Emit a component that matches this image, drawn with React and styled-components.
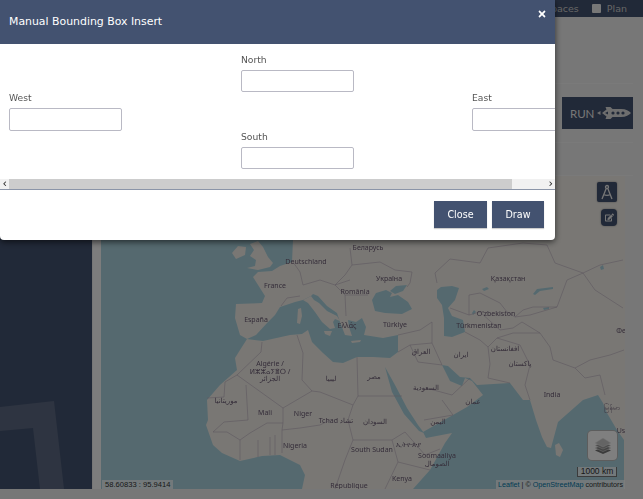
import React from "react";
import styled, { createGlobalStyle } from "styled-components";
import { FaEdit, FaTimes, FaChevronLeft, FaChevronRight } from "react-icons/fa";

const navy = "#435270";
const uiFont = `"DejaVu Sans", "Liberation Sans", sans-serif`;

const GlobalStyle = createGlobalStyle`
  html, body {
    margin: 0;
    padding: 0;
    overflow: hidden;
    background: #eeeeee;
    font-family: ${uiFont};
  }
  * { box-sizing: border-box; }
`;

const Page = styled.div`
  width: 643px;
  height: 499px;
  display: flex;
  flex-direction: column;
  overflow: hidden;
`;

const TopNav = styled.div`
  height: 17px;
  flex: none;
  background: ${navy};
  color: #ccc;
  display: flex;
  justify-content: flex-end;
  align-items: center;
  font-size: 9.5px;
  white-space: nowrap;
`;

const NavItem = styled.span`
  display: flex;
  align-items: center;
  gap: 6px;
  margin-right: ${(p) => p.$gap}px;
`;

const NavCheck = styled.i`
  width: 9px;
  height: 9px;
  background: #eee;
  border-radius: 1px;
`;

const Body = styled.div`
  height: 472px;
  flex: none;
  display: flex;
  align-items: stretch;
`;

const Sidebar = styled.div`
  position: relative;
  width: 92px;
  height: 472px;
  flex: none;
  background: ${navy};
  overflow: hidden;
  svg { position: absolute; left: 0; bottom: 0; }
`;

const Main = styled.div`
  flex: 1;
  min-width: 0;
  height: 472px;
  padding-left: 1px;
  display: flex;
  flex-direction: column;
`;

const Panel = styled.div`
  height: ${(p) => p.$height}px;
  flex: none;
  margin: 0 10px 0 8px;
  border-bottom: 1px solid #f4f4f4;
  display: flex;
  justify-content: flex-end;
  align-items: center;
`;

const RunButton = styled.button`
  width: 71px;
  height: 32px;
  margin: 0;
  border: 0;
  padding: 0 0 0 8px;
  background: ${navy};
  color: #eee;
  font-family: "Lato", sans-serif;
  font-size: 11.5px;
  display: flex;
  align-items: center;
  gap: 3px;
`;

const MapFrame = styled.div`
  position: relative;
  width: 532px;
  height: 313px;
  flex: none;
  padding-left: 8px;
  background: #fafafa;
`;

const MapCanvas = styled.svg`
  display: block;
  filter: blur(0.35px);
`;

const MapText = styled.text`
  font-family: "Noto Sans", "DejaVu Sans", sans-serif;
  font-size: 7px;
  fill: #6a5a72;
  text-anchor: middle;
`;

const CompassButton = styled.div`
  position: absolute;
  left: 504px;
  top: 6px;
  width: 20px;
  height: 20px;
  border-radius: 2px;
  background: ${navy};
  box-shadow: 0 0 2px rgba(0, 0, 0, 0.4);
  display: flex;
  align-items: center;
  justify-content: center;
`;

const EditButton = styled.div`
  position: absolute;
  left: 508px;
  top: 33px;
  width: 16px;
  height: 17px;
  border-radius: 4px;
  background: ${navy};
  box-shadow: 0 0 2px rgba(0, 0, 0, 0.4);
  color: #eee;
  font-size: 9px;
  display: flex;
  align-items: center;
  justify-content: center;
`;

const LayersControl = styled.div`
  position: absolute;
  left: 495px;
  top: 255px;
  width: 29px;
  height: 29px;
  border-radius: 4px;
  background: #fff;
  box-shadow: 0 0 0 1px #bbb;
  display: flex;
  align-items: center;
  justify-content: center;
`;

const ScaleBar = styled.div`
  position: absolute;
  left: 484px;
  top: 291px;
  width: 40px;
  height: 10px;
  border: 1px solid #777;
  border-top: 0;
  background: rgba(255, 255, 255, 0.7);
  color: #333;
  font: 8.5px/9px "Liberation Sans", sans-serif;
  text-align: center;
`;

const Attribution = styled.div`
  position: absolute;
  right: 0;
  bottom: 0;
  height: 9px;
  padding: 0 2px 0 2px;
  background: rgba(255, 255, 255, 0.7);
  color: #333;
  font: 7.2px/9px "Liberation Sans", sans-serif;
  white-space: nowrap;
  a { color: #0078a8; text-decoration: none; }
`;

const Coords = styled.div`
  position: absolute;
  left: 9px;
  bottom: 0;
  height: 9px;
  padding: 0 3px;
  background: rgba(255, 255, 255, 0.7);
  color: #333;
  font: 7.6px/9px "Liberation Sans", sans-serif;
`;

const Backdrop = styled.div`
  position: fixed;
  inset: 0;
  background: rgba(0, 0, 0, 0.5);
`;

const Modal = styled.div`
  position: fixed;
  left: 0;
  top: 0;
  width: 555px;
  height: 240px;
  background: #fff;
  border-radius: 0 0 4px 4px;
  box-shadow: 0 2px 6px rgba(0, 0, 0, 0.6);
  display: flex;
  flex-direction: column;
  overflow: hidden;
`;

const ModalHeader = styled.div`
  height: 44px;
  flex: none;
  padding: 0 9px;
  background: ${navy};
  color: #fff;
  display: flex;
  justify-content: space-between;
  font-size: 10.9px;
  line-height: 43px;
`;

const CloseIcon = styled.span`
  color: #fff;
  font-size: 10px;
  line-height: 10px;
  margin-top: 9px;
  margin-right: -1px;
`;

const ScrollArea = styled.div`
  height: 135px;
  flex: none;
  overflow: hidden;
`;

const BoxGrid = styled.div`
  width: 592px;
  padding: 8.8px 0 0 9px;
  display: grid;
  grid-template-columns: 232px 231px 113px;
  grid-auto-rows: 38.5px;
`;

const Field = styled.label`
  grid-column: ${(p) => p.$col};
  grid-row: ${(p) => p.$row};
  display: block;
  color: #555;
  font-size: 9.2px;
  line-height: 14px;
`;

const BoxInput = styled.input`
  display: block;
  width: 112.5px;
  height: 22.5px;
  margin-top: 3px;
  padding: 0 6px;
  background: #fff;
  border: 1px solid #b9b9c4;
  border-radius: 2px;
`;

const ScrollBar = styled.div`
  height: 11px;
  flex: none;
  display: flex;
  background: #f1f1f1;
  border-bottom: 1px solid #8b95a8;
`;

const ScrollArrow = styled.span`
  width: 9px;
  flex: none;
  color: #333;
  font-size: 5.5px;
  display: flex;
  align-items: center;
  justify-content: center;
`;

const ScrollTrack = styled.div`
  flex: 1;
`;

const ScrollThumb = styled.div`
  height: 100%;
  background: #cdcdcd;
`;

const ModalFooter = styled.div`
  flex: 1;
  padding: 11px 11px 0 0;
  display: flex;
  justify-content: flex-end;
  gap: 5px;
`;

const FooterButton = styled.button`
  width: ${(p) => p.$width}px;
  height: 27px;
  padding: 0;
  border: 0;
  background: ${navy};
  color: #fff;
  font-family: inherit;
  font-size: 9.6px;
  box-shadow: 0 1px 1px rgba(0, 0, 0, 0.2);
`;

const Rocket = () => (
  <svg width="34" height="14" viewBox="0 0 34 14">
    <path d="M0 7 3.500 5V9Z" fill="#ddd" />
    <path d="M5 7 9.500 3.500 8.500 1H13.500L15.500 3H24C29 3 32 5 34 7 32 9 29 11 24 11H15.500L13.500 13H8.500L9.500 10.500Z" fill="#ddd" />
    <path d="M8 7 11 5.500V8.500Z" fill={navy} />
    <circle cx="16" cy="7" r="1.600" fill={navy} />
    <circle cx="21" cy="7" r="1.600" fill={navy} />
    <circle cx="26" cy="7" r="1.600" fill={navy} />
  </svg>
);

const Compass = () => (
  <svg width="14" height="16" viewBox="0 0 14 16" fill="none" stroke="#eee" strokeWidth="1.300">
    <circle cx="7" cy="3" r="1.500" />
    <path d="M6.200 4.500 2 15M7.800 4.500 12 15M3.500 10.500C5.500 11.500 8.500 11.500 10.500 10.500" />
  </svg>
);

const LayersIcon = () => (
  <svg width="18" height="18" viewBox="0 0 18 18">
    <path d="M9 10 1 13.500 9 17 17 13.500Z" fill="#777" />
    <path d="M9 7.500 1 11 9 14.500 17 11Z" fill="#8a8a8a" stroke="#eee" strokeWidth=".5" />
    <path d="M9 5 1 8.500 9 12 17 8.500Z" fill="#999" stroke="#eee" strokeWidth=".5" />
    <path d="M9 1 1 6 9 10 17 6Z" fill="#c9c9c9" stroke="#eee" strokeWidth=".5" />
  </svg>
);

const water = [
  "M101 176H400V240H293L292 262 280 266 272 271 258 272 253 277 265 296 262 303 236 304 235 318 240 335 247 339 240 350 235 358 237 370 220 385 207 400 208 420 206 425 213 445 222 453 240 461 262 456 280 455 300 465 305 475 302 489H101Z",
  "M247 339 256 335 268 322 275 315 280 307 295 302 303 300 311 296 313 294 318 296 327 306 337 313 340 322 345 335 352 336 349 327 348 320 356 322 362 318 366 327 364 335 383 338 398 335 398 352 390 358 373 357 357 357 343 363 333 362 323 353 312 342 308 330 302 334 290 335 263 341Z",
  "M372 300 376 293 386 290 392 293 390 297 398 295 408 302 412 309 402 314 385 313 375 311Z",
  "M390 291 396 286 407 285 403 291 395 294Z",
  "M437 290 441 287 452 286 459 288 455 300 448 308 452 316 463 320 465 332 452 337 444 336 444 318 442 305 437 298Z",
  "M385 367 395 385 407 408 418 425 424 433 419 431 404 414 392 392Z",
  "M413 489 430 470 445 443 452 433 426 438 423 432 453 415 467 407 483 395 472 381 465 378 462 386 450 381 442 365 448 366 460 377 470 378 477 385 510 383 523 400 530 400 536 420 542 437 547 447 551 448 558 422 583 400 598 395 603 403 607 413 617 430 624 440V489Z",
  "M533 294 537 289 553 287 553 289 540 291 535 295Z",
  "M482 289 487 287 489 289 484 291Z",
  "M543 308 549 307 549 309 544 310Z",
  "M600 267 603 265 604 269 601 270Z",
  "M472 313 474 310 476 312 473 315Z",
];

const islands = [
  "M247 268 255 266 256 260 250 256 254 250 250 244 258 241 263 247 268 257 273 263 270 267 258 270Z",
  "M232 253 238 246 246 247 245 255 236 259Z",
  "M555 445 559 443 563 450 560 457 556 455Z",
  "M298 309 301 308 302 316 300 324 297 323Z",
  "M303 300 311 296 314 300 319 303 327 311 337 316 340 321 335 319 333 322 335 328 330 329 322 322 315 312 308 303Z",
  "M324 331 332 331 330 336 325 334Z",
  "M351 341 361 340 360 342 352 343Z",
];

const borders = [
  "262 342 261 352 237 375 283 408 312 391 302 380 303 353 297 335",
  "225 382 237 375 M225 382 224 397 207 398",
  "246 385 248 420 224 422 213 432 227 432 240 440 250 433 267 423 283 423 283 408",
  "283 423 282 430 282 453 M282 430 300 428 320 425 330 420",
  "258 440 258 457 M270 437 270 455 M275 435 275 455 M240 440 240 460",
  "312 391 320 392 353 405 348 420 353 440 345 460 335 489",
  "357 357 358 396 353 405 M358 396 402 396",
  "353 440 372 440 392 440 405 432 M392 440 398 462 385 489 M405 432 425 455 440 449 M398 462 430 470",
  "281 306 287 298 300 296 M293 262 300 272 303 285 M303 285 320 280 335 285 350 280 M350 248 352 265 345 275 335 285",
  "335 285 345 295 368 295 M345 295 346 316 M352 265 380 262 395 270 412 272 410 283 407 287",
  "398 335 420 330 432 322 M398 352 410 345 432 343 432 322 M410 345 418 362 442 365 M432 343 442 365",
  "437 283 435 273 450 259 480 263 488 248 523 243 547 245 555 263 583 273 600 265 623 260",
  "583 273 595 290 623 308 M583 273 567 280 557 307 533 307 523 310 515 317 507 312 500 303 480 293 469 295 469 315 450 308",
  "469 315 480 312 500 330 513 328 M465 332 480 340 488 347 497 338 513 333 540 333 550 347 553 360 M515 317 530 315 557 307 M513 328 522 322 540 333",
  "488 347 490 364 488 378 510 383 M497 338 520 345 530 365 525 385 530 400 M553 360 575 368 585 378 600 375 605 395 M575 368 590 360 610 355 624 350",
  "426 388 452 395 470 378 M453 415 442 400 M424 420 453 415",
];

const labels = [
  ["Deutschland", 306, 264], ["France", 275, 288], ["España", 256, 322], ["Algérie /", 270, 366],
  ["ⵍⵣⵣⴰⵢⴻⵔ /", 270, 373.500], ["الجزائر", 270, 381], ["موريتانيا", 226, 403], ["Mali", 265, 415],
  ["Niger", 303, 416], ["Nigeria", 295, 448], ["Tchad تشاد", 336, 423], ["Беларусь", 368, 250],
  ["Україна", 389, 281], ["România", 355, 294], ["Ελλάς", 347, 328], ["Türkiye", 395, 327],
  ["Қазақстан", 508, 281], ["O'zbekiston", 496, 316], ["Türkmenistan", 479, 328], ["العراق", 421, 354],
  ["ایران", 461, 357], ["افغانستان", 505, 351], ["پاکستان", 520, 366], ["ليبيا", 331, 381],
  ["مصر", 374, 379], ["السعودية", 426, 390], ["India", 552, 397], ["عمان", 473, 404],
  ["اليمن", 438, 424], ["السودان", 375, 424], ["South Sudan", 372, 452], ["ኢትዮጵያ", 408, 447],
  ["Soomaaliya", 437, 457.500], ["الصومال", 437, 466], ["Kenya", 402, 481], ["République", 349, 488],
  ["မြန်မာ", 612, 410], ["Фе", 621, 333], ["Us", 621, 433],
];

const WorldMap = () => (
  <MapCanvas width="524" height="313" viewBox="101 176 524 313">
    <rect x="101" y="176" width="524" height="313" fill="#f2efe9" />
    {water.map((d) => (
      <path key={d} d={d} fill="#aad3df" />
    ))}
    {islands.map((d) => (
      <path key={d} d={d} fill="#f2efe9" />
    ))}
    {borders.map((points) => (
      <path key={points} d={`M${points}`} fill="none" stroke="#bdb0c0" strokeWidth=".6" />
    ))}
    {labels.map(([name, x, y]) => (
      <MapText key={name} x={x} y={y}>{name}</MapText>
    ))}
  </MapCanvas>
);

const App = () => (
  <>
    <GlobalStyle />
    <Page>
      <TopNav>
        <NavItem $gap={13}>Workspaces</NavItem>
        <NavItem $gap={16}><NavCheck />Plan</NavItem>
      </TopNav>
      <Body>
        <Sidebar>
          <svg width="92" height="90" viewBox="0 0 92 90">
            <path d="M0 8 54 2 64 90H40L33 29 0 32Z" fill="#5c6982" />
          </svg>
        </Sidebar>
        <Main>
          <Panel $height={67} />
          <Panel $height={59}>
            <RunButton>RUN <Rocket /></RunButton>
          </Panel>
          <Panel $height={33} />
          <MapFrame>
            <WorldMap />
            <CompassButton><Compass /></CompassButton>
            <EditButton><FaEdit /></EditButton>
            <LayersControl><LayersIcon /></LayersControl>
            <ScaleBar>1000 km</ScaleBar>
            <Attribution><a>Leaflet</a> | © <a>OpenStreetMap</a> contributors</Attribution>
            <Coords>58.60833 : 95.9414</Coords>
          </MapFrame>
        </Main>
      </Body>
    </Page>
    <Backdrop />
    <Modal>
      <ModalHeader>
        Manual Bounding Box Insert
        <CloseIcon><FaTimes /></CloseIcon>
      </ModalHeader>
      <ScrollArea>
        <BoxGrid>
          <Field $col={2} $row={1}>North<BoxInput /></Field>
          <Field $col={1} $row={2}>West<BoxInput /></Field>
          <Field $col={3} $row={2}>East<BoxInput /></Field>
          <Field $col={2} $row={3}>South<BoxInput /></Field>
        </BoxGrid>
      </ScrollArea>
      <ScrollBar>
        <ScrollArrow><FaChevronLeft /></ScrollArrow>
        <ScrollTrack><ScrollThumb style={{ width: `${(503 / 537) * 100}%` }} /></ScrollTrack>
        <ScrollArrow><FaChevronRight /></ScrollArrow>
      </ScrollBar>
      <ModalFooter>
        <FooterButton $width={53}>Close</FooterButton>
        <FooterButton $width={52}>Draw</FooterButton>
      </ModalFooter>
    </Modal>
  </>
);

export default App;
